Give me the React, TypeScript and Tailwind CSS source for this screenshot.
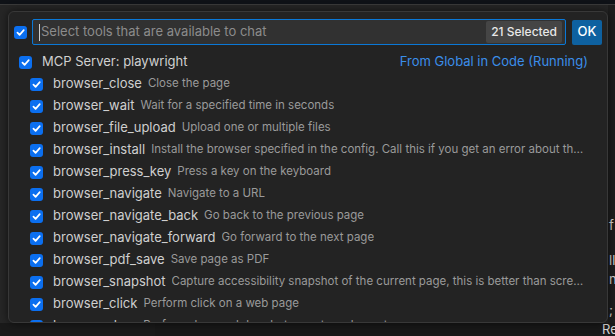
import React from "react";

type Tool = { name: string; desc: string };

const tools: Tool[] = [
  { name: "browser_close", desc: "Close the page" },
  { name: "browser_wait", desc: "Wait for a specified time in seconds" },
  { name: "browser_file_upload", desc: "Upload one or multiple files" },
  {
    name: "browser_install",
    desc: "Install the browser specified in the config. Call this if you get an error about the browser not being installed.",
  },
  { name: "browser_press_key", desc: "Press a key on the keyboard" },
  { name: "browser_navigate", desc: "Navigate to a URL" },
  { name: "browser_navigate_back", desc: "Go back to the previous page" },
  { name: "browser_navigate_forward", desc: "Go forward to the next page" },
  { name: "browser_pdf_save", desc: "Save page as PDF" },
  {
    name: "browser_snapshot",
    desc: "Capture accessibility snapshot of the current page, this is better than screenshot",
  },
  { name: "browser_click", desc: "Perform click on a web page" },
  { name: "browser_drag", desc: "Perform drag and drop between two elements" },
];

function Check() {
  return (
    <span className="flex h-[13px] w-[13px] shrink-0 items-center justify-center rounded-[3px] bg-[#0b6ff0]">
      <svg width="9" height="9" viewBox="0 0 10 10" fill="none">
        <path
          d="M1.6 5.2 L4 7.6 L8.6 2.4"
          stroke="white"
          strokeWidth="1.9"
          strokeLinecap="round"
          strokeLinejoin="round"
        />
      </svg>
    </span>
  );
}

export default function App() {
  return (
    <div
      className="relative h-[336px] w-[615px] overflow-hidden bg-[#1b1b1b]"
      style={{ fontFamily: "Inter, 'Noto Sans', sans-serif" }}
    >
      {/* editor behind the picker */}
      <div className="h-[4px] bg-[#0f1217]" />
      <div className="h-px bg-[#3a3a3a]" />
      <div className="flex h-[318px]">
        <div className="w-[8px] bg-[#262626]" />
        <div className="flex-1 bg-[#262626]" />
        <div className="relative w-[7px] bg-[#1e1e1e] text-[13px] leading-none text-[#d4d4d4]">
          <div className="pl-[1px] pt-[214px]">f</div>
          <div className="pl-[1px] pt-[22px]">ll</div>
          <div className="pl-[1px] pt-[6px]">n</div>
          <div className="pl-[1px] pt-[18px]">;</div>
        </div>
      </div>
      <div className="flex h-[13px]">
        <div className="w-[155px] bg-[#1a1a1a]" />
        <div className="flex-1 bg-[#181818]" />
        <div className="w-[15px] pl-[2px] text-[13px] leading-none text-[#d4d4d4]">Re</div>
      </div>

      {/* quick pick */}
      <div className="absolute left-[8px] top-[11px] h-[312px] w-[600px] overflow-hidden rounded-[6px] border border-[#383838] bg-[#232323] shadow-[0_0_8px_rgba(0,0,0,0.6)]">
        <div className="flex items-center gap-[5px] pl-[5px] pr-[5px] pt-[7px]">
          <Check />
          <div className="flex h-[26px] flex-1 items-center rounded-[2px] border border-[#0a78d7] bg-[#313131] pl-[6px] pr-[3px]">
            <span className="h-[17px] w-px bg-[#cccccc]" />
            <span className="ml-px flex-1 text-[13px] text-[#8c8c8c]">
              Select tools that are available to chat
            </span>
            <span className="rounded-[2px] bg-[#454545] px-[5px] py-[2px] text-[12px] font-medium text-[#e8e8e8]">
              21 Selected
            </span>
          </div>
          <button className="ml-[1px] h-[25px] w-[30px] rounded-[2px] bg-[#0e61a0] text-[13px] font-medium text-white">
            OK
          </button>
        </div>

        <div className="mt-[6px] flex h-[22px] items-center pl-[10px] pr-[19px]">
          <Check />
          <span className="ml-[10px] flex-1 text-[13px] text-[#d0d0d0]">MCP Server: playwright</span>
          <span className="text-[13px] text-[#3b8eea]">From Global in Code (Running)</span>
        </div>

        <div className="flex flex-col">
          {tools.map((t) => (
            <div key={t.name} className="flex h-[22px] items-center pl-[21px] pr-[22px]">
              <Check />
              <span className="ml-[10px] shrink-0 text-[13px] text-[#cfcfcf]">{t.name}</span>
              <span className="ml-[6px] truncate text-[11.5px] text-[#9a9a9a]">{t.desc}</span>
            </div>
          ))}
        </div>
      </div>
    </div>
  );
}
